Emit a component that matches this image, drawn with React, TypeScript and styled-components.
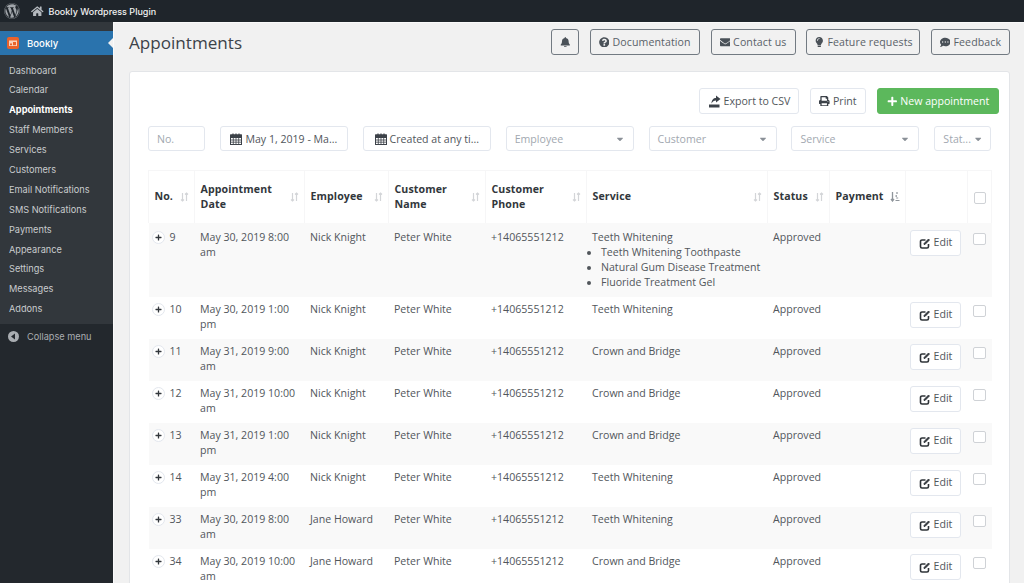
import React from 'react';
import styled, { createGlobalStyle } from 'styled-components';
import { FaBell, FaQuestionCircle, FaEnvelope, FaLightbulb, FaCommentDots, FaPrint, FaPlus, FaWordpress, FaHome, FaCaretDown } from 'react-icons/fa';

const Global = createGlobalStyle`
  html, body { margin: 0; padding: 0; height: 583px; overflow: hidden; background: #f1f1f1; }
  * { box-sizing: border-box; }
`;
const Page = styled.div`width: 1024px; height: 583px; overflow: hidden; display: flex; flex-direction: column; font-family: "Open Sans", sans-serif; font-size: 10.6px; color: #51565b;`;
const TopBar = styled.header`height: 22px; flex: none; background: #1f252b; color: #f1f1f1; display: flex; align-items: center; padding-left: 4px; font-family: Inter, sans-serif; font-size: 9px; font-weight: 500;`;
const HomeIcon = styled(FaHome)`margin: 0 5px 0 11px; font-size: 12.5px; color: #b4b9be;`;
const WpIcon = styled(FaWordpress)`font-size: 16px; color: #a0a5aa;`;
const Body = styled.div`flex: 1; display: flex; min-height: 0;`;
const Side = styled.nav`width: 113px; flex: none; background: #32373c; font-family: Inter, sans-serif; font-size: 9.2px; color: #c9ccce; padding-top: 9px; display: flex; flex-direction: column;`;
const Active = styled.div`height: 24px; flex: none; background: #2a73ad; color: #fff; display: flex; align-items: center; padding-left: 7px; gap: 8px; font-size: 9.6px; font-weight: 500; position: relative; margin-bottom: 5.5px;
  &::after { content: ""; position: absolute; right: 0; top: 7px; border: 5px solid transparent; border-right-color: #f1f1f1; border-left-width: 0; }`;
const NavItem = styled.div<{ $on?: boolean }>`height: 19.9px; flex: none; line-height: 19.9px; padding-left: 9px; color: ${p => p.$on ? '#fff' : '#c9ccce'}; font-weight: ${p => p.$on ? 700 : 400};`;
const Collapse = styled.div`margin-top: 4.5px; flex: 1; background: #23282d; display: flex; align-items: flex-start; padding: 7px 0 0 8px; gap: 8px; color: #a9adb1; line-height: 11px;`;
const Main = styled.main`flex: 1; border-top: 1px solid #fafafa; border-left: 1px solid #fafafa; padding: 6px 14px 0 15px; min-width: 0;`;
const Head = styled.div`display: flex; justify-content: space-between; align-items: center; height: 26px; margin-bottom: 16px;`;
const Title = styled.h1`margin: 2px 0 0; font-size: 17.1px; font-weight: 400; color: #3c4249; line-height: 28px;`;
const HeadBtns = styled.div`display: flex; gap: 10.75px;`;
const HeadBtn = styled.div<{ $w: number }>`width: ${p => p.$w}px; height: 26px; border: 1px solid #727a82; border-radius: 3px; display: flex; align-items: center; justify-content: center; gap: 3px; color: #5a6269; letter-spacing: .1px; svg { color: #4a5158; }`;
const Card = styled.section`background: #fff; border: 1px solid #e3e5e8; border-radius: 3px; height: 600px; padding: 16px 10px 0 18px;`;
const Actions = styled.div`display: flex; justify-content: flex-end; gap: 11px; height: 26px; margin-bottom: 12px;`;
const Btn = styled.div<{ $w: number; $green?: boolean }>`width: ${p => p.$w}px; height: 26px; border: 1px solid ${p => p.$green ? '#5cb85c' : '#e3e7ee'}; background: ${p => p.$green ? '#5cb85c' : '#fff'}; color: ${p => p.$green ? '#fff' : '#51565b'}; border-radius: 3px; display: flex; align-items: center; justify-content: center; gap: 3px; svg { color: ${p => p.$green ? '#fff' : '#3c4249'}; }`;
const Filters = styled.div`display: flex; gap: 14.9px; height: 25px; margin-bottom: 19px;`;
const Filter = styled.div<{ $w: number; $muted?: boolean }>`width: ${p => p.$w}px; flex: none; height: 25px; border: 1px solid #e3e7ee; border-radius: 3px; display: flex; align-items: center; padding: 0 8px; gap: 3px; white-space: nowrap; color: ${p => p.$muted ? '#a2a8b0' : '#51565b'};`;
const Centered = styled(Filter)`justify-content: center; padding: 0 4px;`;
const Spread = styled(Filter)`justify-content: space-between; padding-right: 8px;`;
const Caret = styled(FaCaretDown)`font-size: 10px; color: #8a9097;`;
const Table = styled.table`width: 843px; table-layout: fixed; border-collapse: collapse; font-size: 10.6px;`;
const Th = styled.th`height: 52px; padding: 0 5.5px; border: 1px solid #f6f6f7; border-bottom: 0; text-align: left; color: #32373c; font-weight: 700; line-height: 15px; letter-spacing: .1px;`;
const ThInner = styled.div`display: flex; align-items: center; justify-content: space-between;`;
const Tr = styled.tr<{ $odd: boolean; $tall: boolean }>`background: ${p => p.$odd ? '#f9f9f9' : '#fff'}; height: ${p => p.$tall ? 74 : 42}px;`;
const Td = styled.td`padding: 5px 5.5px 0; vertical-align: top; line-height: 15px; tr:first-child > & { padding-top: 7px; }`;
const NoCell = styled.div`display: flex; align-items: center; gap: 5px; margin-left: -2.5px;`;
const Plus = styled.span`width: 13px; height: 13px; border: 1px solid #e3e7ee; border-radius: 50%; display: inline-flex; align-items: center; justify-content: center; background: #fff; color: #32373c; font-size: 7px; flex: none;`;
const Extras = styled.ul`margin: 0; padding: 0 0 0 9px; white-space: nowrap;`;
const Edit = styled.div`width: 51px; height: 26px; margin-left: -1px; border: 1px solid #e3e7ee; background: #fff; border-radius: 3px; display: flex; align-items: center; justify-content: center; gap: 3px;`;
const Check = styled.span`display: block; width: 12.5px; height: 12.5px; border: 1px solid #cfd2d6; border-radius: 2px; background: #fff; margin: 3px 0 0 0; th > & { margin-top: 2px; }`;

const Sort = ({ active }: { active?: boolean }) => active ? (
  <svg width="10" height="11" viewBox="0 0 10 11" fill="none" stroke="#8f959b" strokeWidth="1.3" style={{ flex: 'none' }}>
    <path d="M2.5 1v8.5M1 8l1.5 2L4 8" />
    <path d="M7 1v2M6.2 4v2M6.2 7h2M5.5 9.5h4" strokeWidth="1.2" />
  </svg>
) : (
  <svg width="9" height="10" viewBox="0 0 9 10" fill="none" stroke="#d3d5d8" strokeWidth="1.2" style={{ flex: 'none' }}>
    <path d="M2.5 1v8M1 7.5 2.5 9 4 7.5M6.5 9V1M5 2.5 6.5 1 8 2.5" />
  </svg>
);
const Logo = () => (
  <svg width="12" height="12" viewBox="0 0 12 12"><rect width="12" height="12" rx="2" fill="#e9622b" /><rect x="2" y="3.5" width="8" height="5.5" fill="#fbd3bd" /><rect x="3" y="6.5" width="2" height="1.7" fill="#e9622b" /><rect x="6" y="5" width="3" height="3.2" fill="#e9622b" /></svg>
);
const ExportIcon = () => (
  <svg width="13" height="13" viewBox="0 0 13 13" fill="#3c4249"><path d="M1 9.5h10.5v3H1z" /><path d="M3.5 8.5c0-3.5 2-5.5 4.5-5.5V.5l4.500 3.500L8 7.500V5.500c-2 0-3.500 1-4.500 3z" /></svg>
);
const CollapseIcon = () => (
  <svg width="11" height="11" viewBox="0 0 11 11"><circle cx="5.5" cy="5.5" r="5.5" fill="#a9adb1" /><path d="M7 2.5v6L3 5.5z" fill="#23282d" /></svg>
);
const CalendarIcon = () => (
  <svg width="12" height="12" viewBox="0 0 12 12" fill="none" stroke="#3c4249" style={{ flex: 'none' }}>
    <rect x=".5" y="2" width="11" height="9.5" strokeWidth="1" />
    <path d="M.5 2h11v2.5H.5z" fill="#3c4249" />
    <path d="M3 .5V3M6 .5V3M9 .5V3" strokeWidth="1.2" />
    <path d="M3.3 4.5v7M6 4.5v7M8.700 4.500v7M.5 7h11M.5 9.200h11" strokeWidth=".8" />
  </svg>
);
const EditIcon = () => (
  <svg width="12" height="12" viewBox="0 0 12 12" fill="none" stroke="#2f3439" style={{ flex: 'none' }}>
    <path d="M9.5 7v2.500a1.500 1.500 0 0 1-1.500 1.500H3A1.500 1.500 0 0 1 1.500 9.500V4.500A1.500 1.500 0 0 1 3 3h3.500" strokeWidth="1.6" />
    <path d="M5 7.500v-1L9.500 2l1 1L6 7.500z" fill="#2f3439" strokeWidth=".8" />
  </svg>
);

const nav = ['Dashboard', 'Calendar', 'Appointments', 'Staff Members', 'Services', 'Customers', 'Email Notifications', 'SMS Notifications', 'Payments', 'Appearance', 'Settings', 'Messages', 'Addons'];
const cols = [46, 110, 84, 97, 101, 181, 62, 76, 62, 24];
const heads: [string, boolean?][] = [['No.'], ['Appointment Date'], ['Employee'], ['Customer Name'], ['Customer Phone'], ['Service'], ['Status'], ['Payment', true]];
const rows = [
  ['9', 'May 30, 2019 8:00 am', 'Nick Knight', 'Teeth Whitening'],
  ['10', 'May 30, 2019 1:00 pm', 'Nick Knight', 'Teeth Whitening'],
  ['11', 'May 31, 2019 9:00 am', 'Nick Knight', 'Crown and Bridge'],
  ['12', 'May 31, 2019 10:00 am', 'Nick Knight', 'Crown and Bridge'],
  ['13', 'May 31, 2019 1:00 pm', 'Nick Knight', 'Crown and Bridge'],
  ['14', 'May 31, 2019 4:00 pm', 'Nick Knight', 'Teeth Whitening'],
  ['33', 'May 30, 2019 8:00 am', 'Jane Howard', 'Teeth Whitening'],
  ['34', 'May 30, 2019 10:00 am', 'Jane Howard', 'Crown and Bridge'],
];

export default function App() {
  return (
    <Page>
      <Global />
      <TopBar><WpIcon /><HomeIcon />Bookly Wordpress Plugin</TopBar>
      <Body>
        <Side>
          <Active><Logo />Bookly</Active>
          {nav.map(n => <NavItem key={n} $on={n === 'Appointments'}>{n}</NavItem>)}
          <Collapse><CollapseIcon />Collapse menu</Collapse>
        </Side>
        <Main>
          <Head>
            <Title>Appointments</Title>
            <HeadBtns>
              <HeadBtn $w={28}><FaBell /></HeadBtn>
              <HeadBtn $w={110}><FaQuestionCircle />Documentation</HeadBtn>
              <HeadBtn $w={85}><FaEnvelope />Contact us</HeadBtn>
              <HeadBtn $w={114}><FaLightbulb />Feature requests</HeadBtn>
              <HeadBtn $w={79}><FaCommentDots />Feedback</HeadBtn>
            </HeadBtns>
          </Head>
          <Card>
            <Actions>
              <Btn $w={100}><ExportIcon />Export to CSV</Btn>
              <Btn $w={56}><FaPrint />Print</Btn>
              <Btn $w={122} $green><FaPlus />New appointment</Btn>
            </Actions>
            <Filters>
              <Filter $w={57} $muted>No.</Filter>
              <Centered $w={128}><CalendarIcon />May 1, 2019 - Ma...</Centered>
              <Centered $w={128}><CalendarIcon />Created at any ti...</Centered>
              <Spread $w={128} $muted>Employee<Caret /></Spread>
              <Spread $w={128} $muted>Customer<Caret /></Spread>
              <Spread $w={128} $muted>Service<Caret /></Spread>
              <Spread $w={57} $muted>Stat...<Caret /></Spread>
            </Filters>
            <Table>
              <colgroup>{cols.map((c, i) => <col key={i} width={c} />)}</colgroup>
              <thead>
                <tr>
                  {heads.map(([h, a]) => <Th key={h}><ThInner><span>{h}</span><Sort active={a} /></ThInner></Th>)}
                  <Th />
                  <Th><Check /></Th>
                </tr>
              </thead>
              <tbody>
                {rows.map((r, i) => (
                  <Tr key={r[0]} $odd={i % 2 === 0} $tall={i === 0}>
                    <Td><NoCell><Plus><FaPlus /></Plus>{r[0]}</NoCell></Td>
                    <Td>{r[1]}</Td>
                    <Td>{r[2]}</Td>
                    <Td>Peter White</Td>
                    <Td>+14065551212</Td>
                    <Td>{r[3]}{i === 0 && <Extras><li>Teeth Whitening Toothpaste</li><li>Natural Gum Disease Treatment</li><li>Fluoride Treatment Gel</li></Extras>}</Td>
                    <Td>Approved</Td>
                    <Td />
                    <Td><Edit><EditIcon />Edit</Edit></Td>
                    <Td><Check /></Td>
                  </Tr>
                ))}
              </tbody>
            </Table>
          </Card>
        </Main>
      </Body>
    </Page>
  );
}
